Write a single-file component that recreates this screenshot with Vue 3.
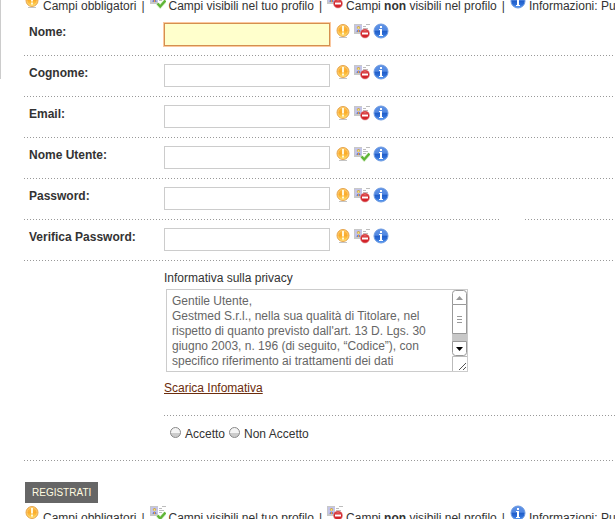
<template>
  <svg class="symbols" aria-hidden="true">
    <defs>
      <linearGradient id="gold" x1="0" y1="0" x2="0" y2="1">
        <stop offset="0" stop-color="#fbbd4e" />
        <stop offset="0.5" stop-color="#fbac2c" />
        <stop offset="1" stop-color="#ffdf5c" />
      </linearGradient>
      <linearGradient id="blue" x1="0" y1="0" x2="0" y2="1">
        <stop offset="0" stop-color="#5f92e6" />
        <stop offset="0.45" stop-color="#5188e2" />
        <stop offset="0.5" stop-color="#1f5cc8" />
        <stop offset="0.75" stop-color="#2f6fd8" />
        <stop offset="1" stop-color="#62a4f8" />
      </linearGradient>
    </defs>
    <symbol id="required" viewBox="0 0 16 16">
      <path d="M4 14.500h8" stroke="#c4c4c4" />
      <circle cx="8" cy="7.500" r="6" fill="url(#gold)" stroke="#e5a550" />
      <circle cx="8" cy="7.500" r="5" fill="none" stroke="#ffd98a" stroke-width=".6" />
      <path d="M7 3h2v5.500H7z" fill="#fff8dc" />
      <rect x="7" y="9.500" width="2" height="2" fill="#fff8dc" />
    </symbol>
    <symbol id="card" viewBox="0 0 16 16">
      <rect x="0" y="1" width="8" height="10" fill="#c8c8c8" />
      <rect x="1" y="2" width="7" height="7" fill="#c3c4ea" />
      <circle cx="4.500" cy="4.500" r="1.600" fill="#c9a24c" />
      <circle cx="4.500" cy="5" r="1" fill="#f7e27a" />
      <path d="M2.500 9q0-2.500 2-2.500t2 2.500z" fill="#7280b8" />
      <path d="M4 7h1v2H4z" fill="#f39a3c" />
      <path d="M12 1.500h4M9 3.500h3M9 5.500h5M9 7.500h3" stroke="#bdbdbd" />
    </symbol>
    <symbol id="visible" viewBox="0 0 16 16">
      <use href="#card" />
      <path d="M7.500 10.500l2.700 3L15.500 7.500" fill="none" stroke="#e4f2da" stroke-width="4" />
      <path d="M7.500 10.500l2.700 3L15.500 7.500" fill="none" stroke="#5fb535" stroke-width="2.400" />
    </symbol>
    <symbol id="hidden" viewBox="0 0 16 16">
      <use href="#card" />
      <circle cx="11" cy="10.500" r="4.500" fill="#d3232a" stroke="#df8f8f" stroke-width=".6" />
      <path d="M8 8.500q3-3 6 0z" fill="#e46a68" />
      <rect x="8" y="9.500" width="6" height="2" fill="#fff" />
    </symbol>
    <symbol id="info" viewBox="0 0 16 16">
      <circle cx="8" cy="8" r="7" fill="url(#blue)" stroke="#6d9ae0" />
      <rect x="7" y="3" width="2" height="2" fill="#fff" />
      <path d="M6 6h3v6h1v1H6v-1h1V7H6z" fill="#fff" />
    </symbol>
  </svg>

  <div class="page">
    <div class="side"></div>
    <form class="registration" @submit.prevent>
      <p class="legend">
        <template v-for="(item, i) in legend" :key="item.icon">
          <span v-if="i" class="bar">|</span>
          <svg class="icon"><use :href="'#' + item.icon" /></svg>
          <span>{{ item.before }} <b v-if="item.bold">{{ item.bold }}</b> {{ item.after }}</span>
        </template>
      </p>

      <div v-for="field in fields" :key="field.id" class="row" :class="{ broken: field.broken }">
        <label :for="field.id">{{ field.label }}</label>
        <input :id="field.id" v-model="values[field.id]" :type="field.type" :class="{ active: field.active }" />
        <span class="icons">
          <svg class="icon"><use href="#required" /></svg>
          <svg class="icon"><use :href="field.visible ? '#visible' : '#hidden'" /></svg>
          <svg class="icon"><use href="#info" /></svg>
        </span>
      </div>

      <div class="privacy">
        <label for="privacy">Informativa sulla privacy</label>
        <div class="policy">
          <textarea id="privacy" v-model="policy" readonly></textarea>
          <svg class="scroll" viewBox="0 0 15 81" aria-hidden="true">
            <rect x="0" y="43" width="15" height="9" fill="#c8c8c8" />
            <path d="M.5 14.500V3.500q0-3 3-3h8q3 0 3 3v11zM.5 14.500v29h14v-29M.5 51.500v11q0 3 3 3h8q3 0 3-3v-11z" fill="#fff" stroke="#999" />
            <path d="M4 10h7L7.500 6z" fill="#999" />
            <path d="M5 26.500h5M5 29.500h5M5 32.500h5" stroke="#999" />
            <path d="M4 57h7l-3.500 4z" fill="#000" />
            <path d="M.5 81V66.500H15" fill="none" stroke="#bbb" />
            <path d="M7 80l7-7M11 80l3-3" stroke="#555" />
          </svg>
        </div>
        <a href="#">Scarica Infomativa</a>
      </div>

      <div class="consent">
        <input id="yes" v-model="consent" type="radio" name="consent" value="yes" />
        <label for="yes">Accetto</label>
        <input id="no" v-model="consent" type="radio" name="consent" value="no" />
        <label for="no">Non Accetto</label>
      </div>

      <button type="submit">REGISTRATI</button>

      <p class="legend">
        <template v-for="(item, i) in legend" :key="item.icon">
          <span v-if="i" class="bar">|</span>
          <svg class="icon"><use :href="'#' + item.icon" /></svg>
          <span>{{ item.before }} <b v-if="item.bold">{{ item.bold }}</b> {{ item.after }}</span>
        </template>
      </p>
    </form>
  </div>
</template>

<script setup>
import { reactive, ref } from 'vue';

const legend = [
  { icon: 'required', before: 'Campi obbligatori' },
  { icon: 'visible', before: 'Campi visibili nel tuo profilo' },
  { icon: 'hidden', before: 'Campi', bold: 'non', after: 'visibili nel profilo' },
  { icon: 'info', before: 'Informazioni: Punta' }
];

const fields = [
  { id: 'nome', label: 'Nome:', type: 'text', active: true },
  { id: 'cognome', label: 'Cognome:', type: 'text' },
  { id: 'email', label: 'Email:', type: 'text' },
  { id: 'utente', label: 'Nome Utente:', type: 'text', visible: true },
  { id: 'password', label: 'Password:', type: 'password', broken: true },
  { id: 'verifica', label: 'Verifica Password:', type: 'password' }
];

const values = reactive({});
const consent = ref('');
const policy = ref(`Gentile Utente,
Gestmed S.r.l., nella sua qualità di Titolare, nel rispetto di quanto previsto dall'art. 13 D. Lgs. 30 giugno 2003, n. 196 (di seguito, “Codice”), con specifico riferimento ai trattamenti dei dati`);
</script>

<style>
html,
body {
  overflow: hidden;
  background: #fff;
}
</style>

<style scoped>
.symbols {
  position: absolute;
  width: 0;
  height: 0;
}

.page {
  display: flex;
  height: 100vh;
  overflow: hidden;
  font: 12px/15px "Liberation Sans", Arial, sans-serif;
  color: #333;
}

.side {
  box-sizing: border-box;
  flex: 0 0 24px;
  height: 79px;
  border-left: 1px solid #ccc;
}

.registration {
  flex: 1;
  min-width: 0;
  margin-top: -7px;
}

.icon {
  flex: none;
  width: 16px;
  height: 16px;
}

.legend {
  display: flex;
  gap: 3px;
  height: 22px;
  margin: 0;
  white-space: nowrap;
}

.legend span {
  padding-top: 6px;
}

.legend .bar {
  margin: 0 2px;
}

.row,
.consent {
  background: repeating-linear-gradient(90deg, #999 0 1px, transparent 1px 3px) left bottom / 100% 1px no-repeat;
}

.row {
  position: relative;
  display: grid;
  grid-template-columns: 135px 166px 1fr;
  align-items: start;
  box-sizing: border-box;
  height: 41px;
  padding: 8px 0 0 5px;
}

.row label {
  padding-top: 2px;
  font-weight: bold;
}

.row input {
  box-sizing: border-box;
  width: 166px;
  height: 23px;
  padding: 2px 4px;
  border: 1px solid #ccc;
  background: #fff;
  font: inherit;
}

.row input.active {
  border-color: #d4904f;
  background: #ffc;
  box-shadow: 0 0 0 1px #fbc8a0;
}

.row.broken::after {
  content: "";
  position: absolute;
  right: 91px;
  bottom: 0;
  width: 24px;
  height: 1px;
  background: #fff;
}

.icons {
  display: flex;
  gap: 3px;
  padding-left: 5px;
}

.privacy {
  display: flex;
  flex-direction: column;
  align-items: flex-start;
  margin-left: 140px;
  padding: 10px 0 20px;
  background: repeating-linear-gradient(90deg, #999 0 1px, transparent 1px 3px) left bottom / 100% 1px no-repeat;
}

.policy {
  position: relative;
  margin: 3px 2px 9px;
}

.policy textarea {
  display: block;
  box-sizing: border-box;
  width: 302px;
  height: 83px;
  padding: 4px 20px 2px 5px;
  border: 1px solid #ccc;
  color: #666;
  font: inherit;
  resize: none;
  overflow: hidden;
}

.scroll {
  position: absolute;
  top: 1px;
  right: 1px;
  width: 15px;
  height: 81px;
}

.privacy a {
  color: #6b2c0c;
}

.consent {
  display: flex;
  gap: 4px;
  height: 34px;
  padding: 11px 0 0 146px;
}

.consent input {
  appearance: none;
  box-sizing: border-box;
  width: 11px;
  height: 11px;
  margin: 0;
  border: 1px solid #888;
  border-radius: 50%;
  background: linear-gradient(#f4f4f4 50%, #ccc 50%);
}

button {
  display: block;
  height: 21px;
  margin: 21px 0 2px 1px;
  padding: 0 7px;
  border: 0;
  background: #666;
  color: #fffbe0;
  font: 10px/21px "Liberation Sans", Arial, sans-serif;
}
</style>
